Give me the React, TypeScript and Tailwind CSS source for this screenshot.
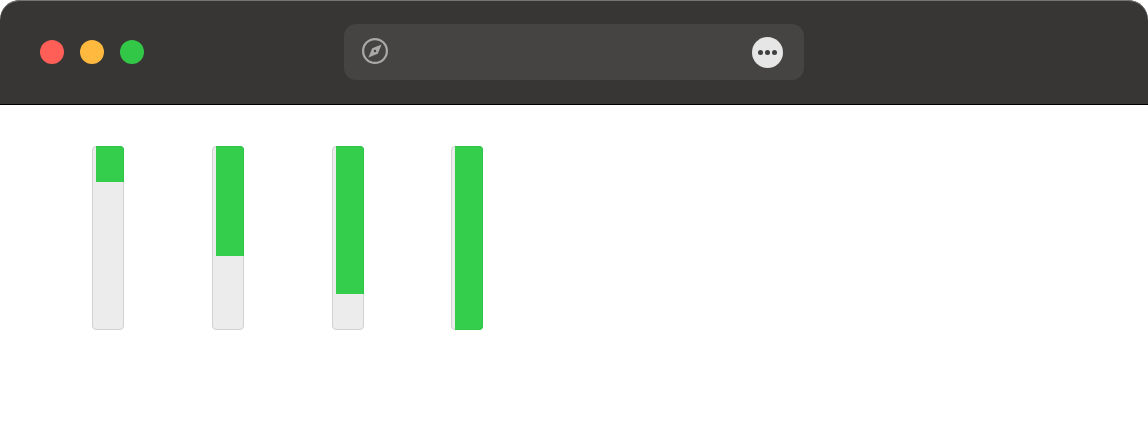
const bars = [36, 110, 148, 184];

function Bar({ height, className }: { height: number; className?: string }) {
  const full = height === 184;
  return (
    <div className={`relative h-[184px] w-8 rounded-[4px] border border-[#d2d2d2] bg-[#ececec] ${className ?? ""}`}>
      <div
        className={`absolute top-[-1px] right-[-1px] w-[28px] rounded-tr-[4px] border-t border-r border-[#30c449] bg-[#34cd4c] ${full ? "rounded-br-[4px] border-b" : ""}`}
        style={{ height }}
      />
    </div>
  );
}

function CompassIcon() {
  return (
    <svg viewBox="0 0 26 26" className="mb-[2px] h-[26px] w-[26px]" fill="none">
      <circle cx="13" cy="13" r="11.9" stroke="#a9a9a8" strokeWidth="2.2" />
      <path
        fillRule="evenodd"
        d="M19.6 6.4 15.8 15.8 6.4 19.6 10.2 10.2ZM13 11.7a1.3 1.3 0 1 0 0 2.6 1.3 1.3 0 0 0 0-2.6Z"
        fill="#a9a9a8"
      />
    </svg>
  );
}

export default function App() {
  return (
    <div className="h-[448px] w-[1148px] overflow-hidden bg-white font-['Liberation_Sans',sans-serif]">
      <header className="relative flex h-[105px] items-center rounded-t-[20px] border-b border-black bg-[#373634] shadow-[inset_0_1px_0_#757472]">
        <div className="ml-10 flex gap-4">
          <span className="h-6 w-6 rounded-full bg-[#ff5f57]" />
          <span className="h-6 w-6 rounded-full bg-[#ffb93e]" />
          <span className="h-6 w-6 rounded-full bg-[#33c748]" />
        </div>
        <div className="ml-[200px] flex h-14 w-[460px] items-center justify-between rounded-xl bg-[#454442] pr-[21px] pl-[18px]">
          <CompassIcon />
          <div className="flex h-[31px] w-[31px] items-center justify-center gap-[2.3px] rounded-full bg-[#e6e6e6]">
            <span className="h-[5px] w-[5px] rounded-full bg-[#3f3f3f]" />
            <span className="h-[5px] w-[5px] rounded-full bg-[#3f3f3f]" />
            <span className="h-[5px] w-[5px] rounded-full bg-[#3f3f3f]" />
          </div>
        </div>
      </header>
      <main className="flex gap-[88px] pt-[41px] pl-[92px]">
        {bars.map((h, i) => (
          <Bar key={i} height={h} className={i === 3 ? "ml-[-1px]" : ""} />
        ))}
      </main>
    </div>
  );
}
